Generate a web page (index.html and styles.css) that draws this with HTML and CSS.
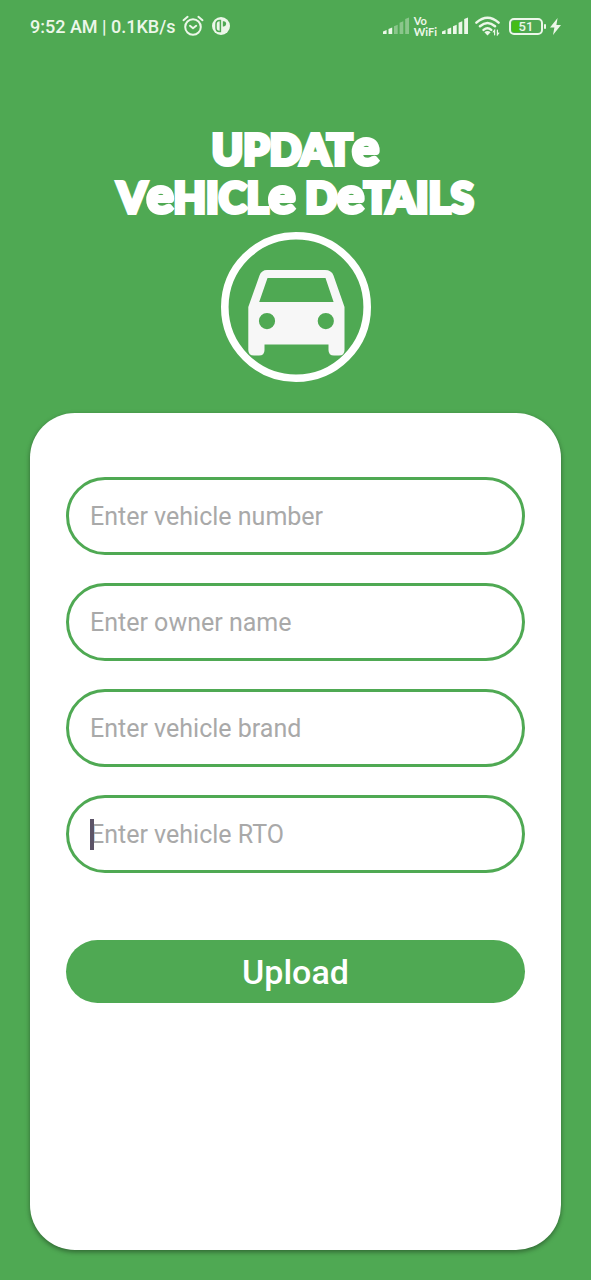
FILE: index.html
```html
<!DOCTYPE html>
<html lang="en">
<head>
<meta charset="utf-8">
<meta name="viewport" content="width=device-width, initial-scale=1">
<title>Update Vehicle Details</title>
<link rel="stylesheet" href="styles.css">
</head>
<body>
<div class="screen">
  <header class="status">
    <div class="status-group">
      <span class="clock">9:52 AM | 0.1KB/s</span>
      <svg class="icon-alarm" width="22" height="22" viewBox="0 0 22 22" fill="none" stroke="currentColor" stroke-width="2" stroke-linecap="round" stroke-linejoin="round" aria-hidden="true">
        <circle cx="11" cy="12" r="7.8"/>
        <path d="M1.5 5.2 5.6 1.8M20.5 5.2 16.4 1.8M8 10.8l3 2.4 3.2-2.4"/>
      </svg>
      <svg class="icon-app" width="18" height="18" viewBox="0 0 18 18" aria-hidden="true">
        <circle cx="9" cy="9" r="9" fill="currentColor"/>
        <path d="M8.400 3.400H7.600Q4 3.600 4 7V11Q4 14.400 7.600 14.600H8.400Z" fill="none" stroke="#4fa953" stroke-width="1.500"/>
        <path d="M10.800 4.200H12Q14.200 4.600 14.200 6.800T12 9.400H10.800Z" fill="#4fa953"/>
      </svg>
    </div>
    <div class="status-group">
      <svg width="27" height="18" viewBox="0 0 27 18" fill="currentColor" aria-hidden="true">
        <path d="M0 14.5 3.6 13V17H0ZM5.5 12 9.2 10.5V17H5.5Z"/>
        <path d="M11 9.2 14.7 7.7V17H11ZM16.6 5.8 20.3 4.2V17h-3.7ZM22.2 2 26 .5V17h-3.8Z" opacity=".38"/>
      </svg>
      <span class="vowifi"><span>Vo</span><span>WiFi</span></span>
      <svg width="27" height="18" viewBox="0 0 27 18" fill="currentColor" aria-hidden="true">
        <path d="M0 14.5 3.6 13V17H0ZM5.5 12 9.2 10.5V17H5.5ZM11 9.2 14.7 7.7V17H11ZM16.6 5.8 20.3 4.2V17h-3.7ZM22.2 2 26 .5V17h-3.8Z"/>
      </svg>
      <svg class="icon-wifi" width="26" height="20" viewBox="0 0 26 20" fill="none" stroke="currentColor" stroke-width="2.5" stroke-linecap="round" aria-hidden="true">
        <path d="M1.4 6.6Q12.5-3.2 23.6 6.6M5 10.3Q12.5 3.8 20 10.3M8.6 13.9Q12.5 10.6 16.2 13.9"/>
        <path d="M12.5 19.500 9.4 16.2Q12.5 13.9 15.6 16.2Z" fill="currentColor" stroke="none"/>
        <path d="M19.6 18.8V14.2l-1.400 1.800M22.400 14.200v4.600l1.400-1.800" stroke-width="1.2"/>
      </svg>
      <span class="battery"><span class="battery-level">51</span></span>
      <svg class="icon-bolt" width="11" height="17" viewBox="0 0 11 17" fill="currentColor" aria-hidden="true"><path d="M7.6 0 0 9.6H4.4L3 17 11 7H6.4Z"/></svg>
    </div>
  </header>

  <h1 class="title" aria-label="Update Vehicle Details">
    <span class="title-line">UPDAT<span class="tall">e</span></span>
    <span class="title-line">V<span class="tall">e</span>HICL<span class="tall">e</span> D<span class="tall">e</span>TAILS</span>
  </h1>

  <svg class="emblem" width="150" height="150" viewBox="0 0 150 150" aria-hidden="true">
    <circle cx="75" cy="75" r="71.2" fill="none" stroke="#fff" stroke-width="7.6"/>
    <path fill="#f7f7f7" fill-rule="evenodd" d="M46 38H104Q110.500 38 112.500 43.500L123.500 75V118Q123.500 123.500 118 123.500H113Q107.500 123.500 107.500 118V112.500H43.500V118Q43.500 123.500 38 123.500H33Q27.300 123.500 27.300 118V75L38.500 43.500Q40.500 38 46 38ZM46.500 46 38.200 70H112.600L104.500 46ZM46 81a8.100 8.100 0 1 0 0 16.200 8.100 8.100 0 1 0 0-16.200ZM104.800 81a8.100 8.100 0 1 0 0 16.200 8.100 8.100 0 1 0 0-16.200Z"/>
  </svg>

  <form class="card">
    <div class="fields">
      <div class="field"><input class="field-input" type="text" placeholder="Enter vehicle number" aria-label="Vehicle number"></div>
      <div class="field"><input class="field-input" type="text" placeholder="Enter owner name" aria-label="Owner name"></div>
      <div class="field"><input class="field-input" type="text" placeholder="Enter vehicle brand" aria-label="Vehicle brand"></div>
      <div class="field field-active"><input class="field-input" type="text" placeholder="Enter vehicle RTO" aria-label="Vehicle RTO"></div>
    </div>
    <button class="upload" type="button">Upload</button>
  </form>
</div>
</body>
</html>
```
FILE: styles.css
```css
* { box-sizing: border-box; }

body {
  margin: 0;
  background: #4fa953;
  font-family: Roboto, "Liberation Sans", sans-serif;
}

.screen {
  display: flex;
  flex-direction: column;
  align-items: center;
  min-height: 100vh;
  padding: 0 30px 30px;
}

.status {
  display: flex;
  justify-content: space-between;
  align-items: center;
  width: 100%;
  height: 52px;
  color: #ecf7e9;
}

.status-group { display: flex; align-items: center; }
.clock { font-size: 18px; font-weight: 500; white-space: nowrap; }
.icon-alarm { margin-left: 6px; }
.icon-app { margin-left: 8px; }

.vowifi {
  display: flex;
  flex-direction: column;
  margin: 0 5px 0 4px;
  font: 700 11px/11px Lato, sans-serif;
}

.icon-wifi { margin-left: 6px; }

.battery {
  position: relative;
  width: 34px;
  height: 17px;
  margin-left: 8px;
  padding: 1px;
  border: 2px solid currentColor;
  border-radius: 5px;
}

.battery::after {
  content: "";
  position: absolute;
  top: 4px;
  right: -5px;
  width: 2px;
  height: 5px;
  border-radius: 1px;
  background: currentColor;
}

.battery-level {
  display: block;
  border-radius: 2px;
  background: linear-gradient(90deg, #43bd16 30%, transparent 30%);
  font-size: 13px;
  font-weight: 500;
  line-height: 11px;
  text-align: center;
}

.icon-bolt { margin-left: 7px; }

.title {
  margin: 73px 0 11px;
  color: #fff;
  font: 900 42px/48px Lato, sans-serif;
  text-align: center;
  -webkit-text-stroke: 4px #fff;
}

.title-line { display: block; height: 48px; white-space: nowrap; }
.tall { font-size: 50px; line-height: 40px; }

.emblem { flex: none; }

.card {
  display: flex;
  flex: 1;
  flex-direction: column;
  gap: 67px;
  width: 100%;
  margin-top: 31px;
  padding: 64px 36px;
  border-radius: 45px;
  background: #fff;
  box-shadow: 0 2px 5px rgba(0, 0, 0, 0.4);
}

.fields { display: flex; flex-direction: column; gap: 28px; }
.field { position: relative; height: 78px; }

.field-input {
  width: 100%;
  height: 100%;
  padding: 0 21px;
  border: 3px solid #4fa953;
  border-radius: 39px;
  outline: none;
  background: #fff;
  color: #333;
  font: 400 25px Roboto, sans-serif;
}

.field-input::placeholder { color: #a9a9a9; opacity: 1; }

.field-active::before {
  content: "";
  position: absolute;
  top: 24px;
  left: 24px;
  width: 4px;
  height: 31px;
  background: #5c5468;
}

.upload {
  height: 63px;
  border: 0;
  border-radius: 32px;
  background: #4fa953;
  color: #fff;
  font: 500 34px Roboto, sans-serif;
}
```
